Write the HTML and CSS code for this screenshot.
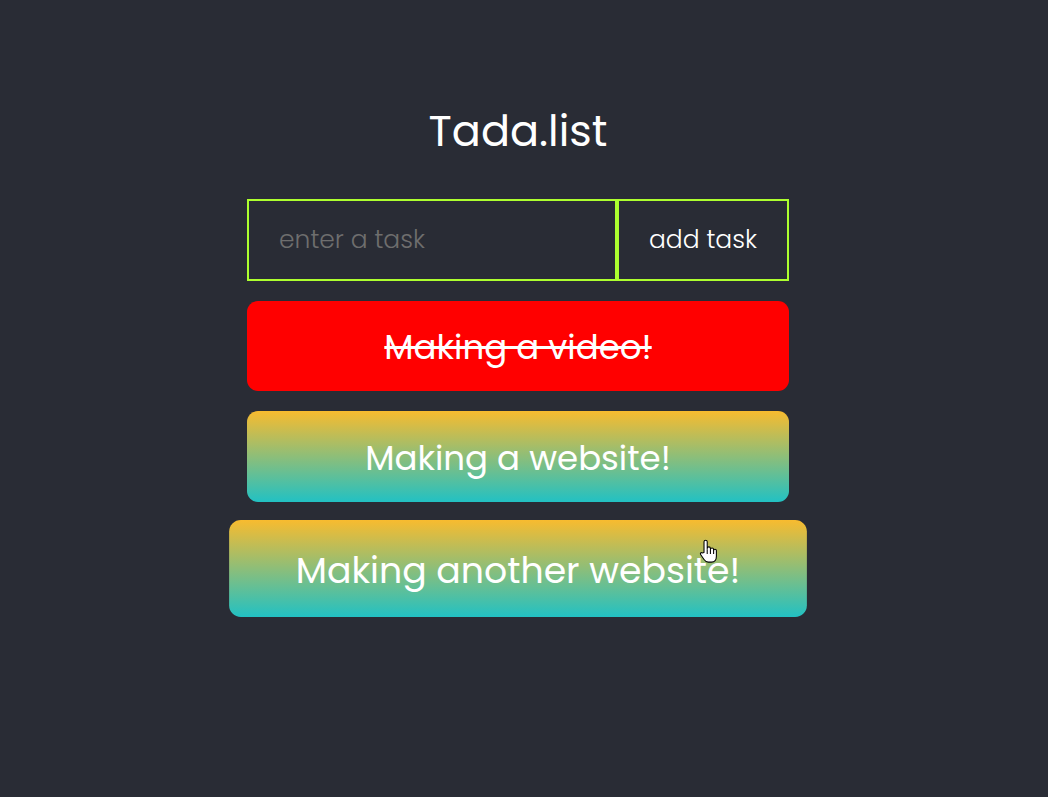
FILE: index.html
```html
<!DOCTYPE html>
<html lang="en">
<head>
<meta charset="utf-8">
<title>Tada.list</title>
<link rel="stylesheet" href="styles.css">
</head>
<body>
<div class="page">
  <h1 class="title">Tada.list</h1>
  <form class="add-form">
    <input class="task-input" type="text" placeholder="enter a task">
    <button class="add-btn" type="button">add task</button>
  </form>
  <ul class="tasks">
    <li class="task done">Making a video!</li>
    <li class="task">Making a website!</li>
    <li class="task hovered">Making another website!
      <svg class="cursor" width="17" height="23" viewBox="0 0 17 23" aria-hidden="true">
        <path d="M4.5 12.5V2.5A1.5 1.5 0 0 1 7.5 2.5V9V8.7A1.5 1.5 0 0 1 10.5 8.7V9.7A1.5 1.5 0 0 1 13.5 9.7V10.7A1.3 1.3 0 0 1 16.1 10.7V16C16.1 19.3 14.5 21.5 11.5 21.5H8.5C6.5 21.5 5.5 20.5 4.5 19L1.3 14.3C0.6 13.3 1.8 12.2 2.8 12.9Z" fill="#fff" stroke="#000" stroke-width="1" stroke-linejoin="round"/>
        <path d="M7.5 9.5V14M10.5 10V14M13.5 10.5V14" stroke="#000" stroke-width="1"/>
      </svg>
    </li>
  </ul>
</div>
</body>
</html>
```
FILE: styles.css
```css
* { box-sizing: border-box; }

html, body {
  margin: 0;
  background: #292c35;
}

body {
  font-family: "Poppins", "Inter", "Noto Sans", sans-serif;
  color: #fff;
}

.page {
  min-height: 797px;
  padding: 101px 12px 0 0;
  display: flex;
  flex-direction: column;
  align-items: center;
}

.title {
  margin: 0 0 38px;
  font-size: 43px;
  line-height: 60px;
  font-weight: 400;
}

.add-form {
  display: flex;
  width: 542px;
  height: 82px;
  margin: 0;
}

.task-input {
  width: 370px;
  height: 100%;
  background: transparent;
  border: 2px solid #adff2f;
  padding: 0 0 0 30px;
  font-family: inherit;
  font-size: 25px;
  font-weight: 300;
  color: #fff;
  outline: none;
}

.task-input::placeholder {
  color: #6e6e6e;
}

.add-btn {
  width: 172px;
  height: 100%;
  background: transparent;
  border: 2px solid #adff2f;
  font-family: inherit;
  font-size: 25px;
  font-weight: 300;
  color: #fff;
  padding: 0;
}

.tasks {
  list-style: none;
  margin: 0;
  padding: 0;
  width: 542px;
}

.task {
  position: relative;
  margin-top: 20px;
  height: 91px;
  padding-top: 3px;
  border-radius: 11px;
  background: linear-gradient(0deg, #22c1c3 0%, #f8bb2f 100%);
  display: flex;
  align-items: center;
  justify-content: center;
  font-size: 34px;
  font-weight: 400;
  color: #fff;
}

.task.done {
  height: 90px;
  background: #ff0000;
  text-decoration: line-through;
  text-decoration-thickness: 3px;
}

.task.hovered {
  margin-top: 19px;
  transform: translateY(2px) scale(1.066);
}

.cursor {
  position: absolute;
  left: 441px;
  top: 18px;
}
```
